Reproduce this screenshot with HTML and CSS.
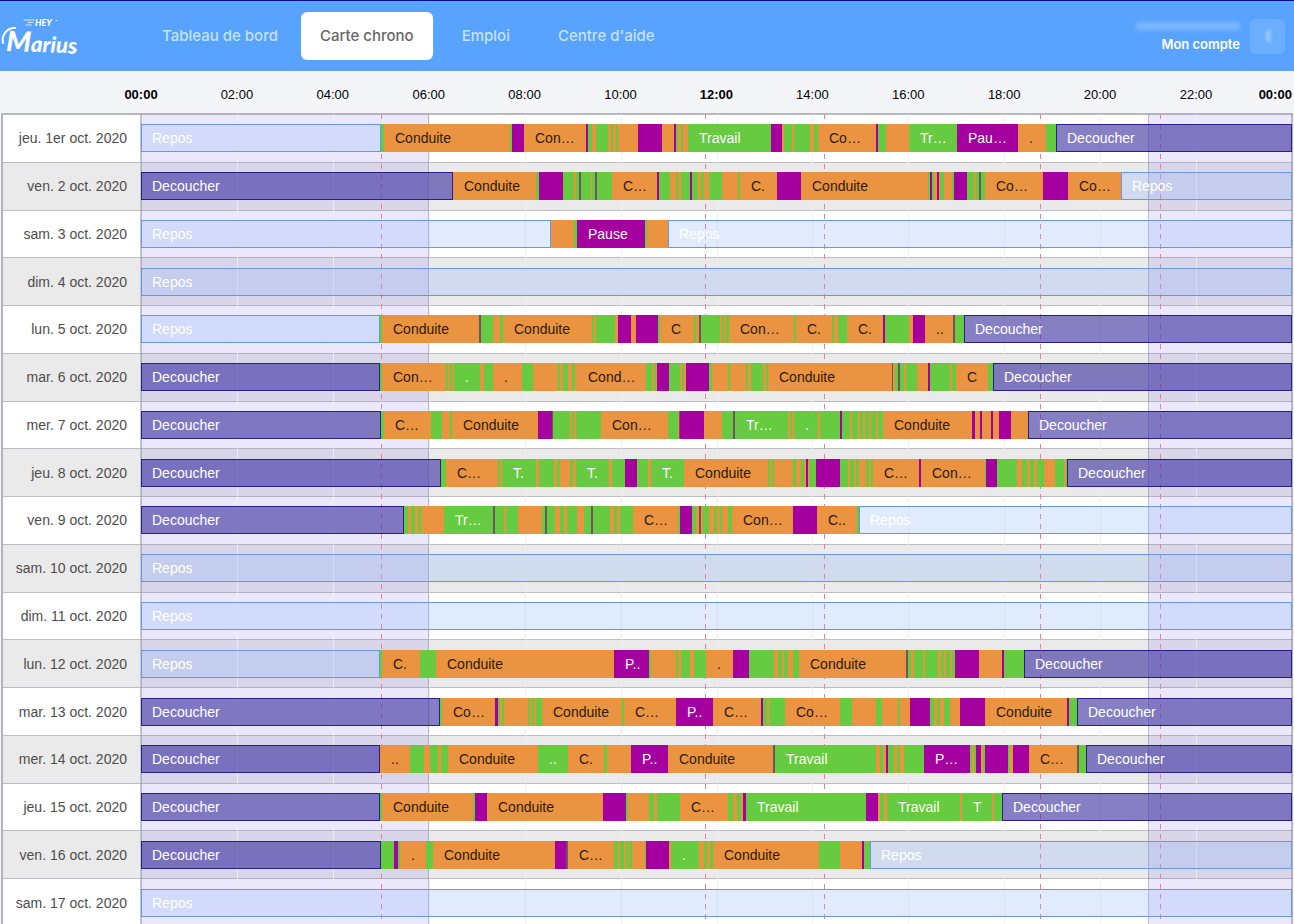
FILE: index.html
```html
<!DOCTYPE html>
<html lang="fr">
<head>
<meta charset="utf-8">
<meta name="viewport" content="width=device-width, initial-scale=1">
<title>Hey Marius - Carte chrono</title>
<link rel="stylesheet" href="styles.css">
</head>
<body>
<header class="topbar">
  <a class="logo" href="#" aria-label="Hey Marius">
    <svg class="logo-art" viewBox="0 0 80 42" width="80" height="42">
      <g stroke="#fff" stroke-width="1" stroke-linecap="round" opacity=".75">
        <path d="M24 5h10M28 7.500h5M26 10h5M56 5.500h1"/>
      </g>
      <text class="logo-hey" x="35" y="11">HEY</text>
      <text class="logo-name" x="6" y="36" transform="rotate(2 6 36)"><tspan class="logo-initial">M</tspan>arius</text>
      <path d="M3 28C1 20 8 12 15 13" fill="none" stroke="#fff" stroke-width="2" stroke-linecap="round"/>
      <path d="M71 38c2 0 4-1 5-3" fill="none" stroke="#fff" stroke-width="2" stroke-linecap="round"/>
    </svg>
  </a>
  <nav class="nav">
    <a class="nav-link" href="#">Tableau de bord</a>
    <a class="nav-link nav-link--active" href="#" aria-current="page">Carte chrono</a>
    <a class="nav-link" href="#">Emploi</a>
    <a class="nav-link" href="#">Centre d'aide</a>
  </nav>
  <div class="account">
    <div class="account-text">
      <span class="account-name" aria-hidden="true"></span>
      <a class="account-link" href="#">Mon compte</a>
    </div>
    <button class="avatar" type="button" aria-label="Profil"><span class="avatar-mark"></span></button>
  </div>
</header>
<main class="board">
  <div class="axis" id="axis"></div>
  <div class="chart" id="chart">
    <div class="backdrop" id="backdrop">
      <div class="night night--morning"></div>
      <div class="night night--evening"></div>
    </div>
  </div>
</main>
<script src="chart.js"></script>
</body>
</html>
```

FILE: styles.css
```css
* { box-sizing: border-box; }

body {
  margin: 0;
  height: 100vh;
  overflow: hidden;
  display: flex;
  flex-direction: column;
  background: #f4f5f8;
  font-family: "Liberation Sans", Arial, sans-serif;
  font-size: 14px;
}

a { color: inherit; text-decoration: none; }

.topbar {
  flex: none;
  display: flex;
  align-items: center;
  height: 71px;
  padding-right: 9px;
  border-top: 1px solid #07107c;
  background: #58a3ff;
  color: #fff;
  font-family: Inter, sans-serif;
}

.logo { width: 143px; height: 42px; }
.logo-art { display: block; }
.logo-hey { fill: #fff; font: italic 900 9px Lato, sans-serif; }
.logo-name { fill: #fff; font: italic 900 22px Lato, sans-serif; }
.logo-initial { font-size: 28px; }

.nav { display: flex; gap: 10px; flex: 1; }

.nav-link {
  padding: 0 19px;
  border-radius: 6px;
  line-height: 48px;
  font-size: 15px;
  font-weight: 500;
  color: #c4e2ff;
  white-space: nowrap;
}
.nav-link--active { margin-left: -6px; background: #fff; color: #666; }

.account { display: flex; align-items: center; gap: 10px; }
.account-text { display: flex; flex-direction: column; align-items: flex-end; gap: 5px; padding-top: 3px; }
.account-name {
  width: 104px;
  height: 8px;
  background: rgba(255, 255, 255, .22);
  filter: blur(2px);
}
.account-link { font-size: 13px; line-height: 18px; font-weight: 600; }
.avatar {
  display: grid;
  place-items: center;
  width: 35px;
  height: 35px;
  padding: 0;
  border: 0;
  border-radius: 6px;
  background: #6baeff;
}
.avatar-mark {
  width: 6px;
  height: 14px;
  border-radius: 6px 0 0 6px;
  background: #90c3ff;
  filter: blur(1px);
}

.board { flex: 1; min-height: 0; }

.axis {
  display: flex;
  justify-content: space-between;
  height: 42px;
  padding: 4px 2px 0 141px;
  font-size: 13px;
  line-height: 40px;
  color: #000;
}
.tick { display: flex; justify-content: center; width: 0; }
.tick--major { font-weight: 700; }
.tick:last-child { justify-content: flex-end; }

.chart {
  position: relative;
  display: grid;
  grid-auto-rows: 1fr;
  min-height: 813px;
  margin: 0 1px;
  border: solid #b3b4ba;
  border-width: 1px 1px 0 2px;
}

.backdrop { position: absolute; top: 0; bottom: 0; left: 138px; right: 0; }

.night {
  position: absolute;
  top: 0;
  bottom: 0;
  background: rgba(120, 90, 230, .14);
  border: solid rgba(80, 80, 110, .3);
  border-width: 0 1px;
}
.night--morning { left: 0; width: 25%; }
.night--evening { left: 87.5%; right: 0; }

.gridline { position: absolute; top: 0; bottom: 0; width: 1px; background: rgba(240, 236, 242, .8); }
.limit {
  position: absolute;
  top: 0;
  bottom: 0;
  width: 1px;
  background: repeating-linear-gradient(#ea7da6 0 5px, transparent 5px 10px);
}

.row { display: flex; align-items: center; background: #fff; border-top: 1px solid #bcbdc2; }
.row:nth-child(odd) { background: #eaeaea; }

.day {
  flex: none;
  align-self: stretch;
  display: flex;
  align-items: center;
  justify-content: flex-end;
  width: 138px;
  padding-right: 13px;
  border-right: 1px solid #c6c6cc;
  color: #4d4d4d;
  white-space: nowrap;
}

.track { position: relative; flex: 1; min-width: 0; display: flex; height: 28px; }

.bar { flex-basis: 0; min-width: 0; overflow: hidden; line-height: 28px; white-space: nowrap; color: #fff; }
.bar-label { padding-left: 11px; }
.bar--conduite { background: #ea9441; color: #2e1b06; }
.bar--travail { background: #66cb40; }
.bar--pause { background: #a5009f; }
.bar--autre { background: #705463; }
.bar--repos { background: rgba(130, 180, 250, .25); box-shadow: inset 0 0 0 1px #6599e6; }
.bar--decoucher { background: rgba(72, 60, 165, .66); box-shadow: inset 0 0 0 1px #27208b; }
```

FILE: chart.js
```js
// Axis units of the day track: START is 00:00, END is 24:00.
const START = 141;
const END = 1292;

const KINDS = { o: "conduite", g: "travail", p: "pause", k: "autre", R: "repos", D: "decoucher" };
const DEFAULT_LABELS = { R: "Repos", D: "Decoucher" };

// Each activity is <start><kind>[:label] and runs until the next one.
const DAYS = [
  ["jeu. 1er oct. 2020", "141R 381g 384o:Conduite 510g 512p 524o:Con… 586p 588g 592o 596g 608o 611g 613o 616g 618o 638p 662o 674p 676g 678o 681g 683o 686o 688g:Travail 771p 782o 784g 792o 794g 810o 814g 818o:Co… 876p 878g 886o 909g:Tr… 957p:Pau… 1018o:. 1046g 1056D"],
  ["ven. 2 oct. 2020", "141D 453o:Conduite 536g 539p 563g 574o 576g 579k 581g 591o 592g 595k 597g 612o:C… 657p 659g 670o 676g 678o 681g 690p 692g 698o 701g 704o 709g 722o 738g 740o:C. 777p 801o:Conduite 928g 930p 932g 934o 937p 939o 940g 944o 952g 954p 967g 974o 976g 979k 981g 985o:Co… 1043p 1068o:Co… 1121R"],
  ["sam. 3 oct. 2020", "141R 551o 574g 577p:Pause 645g 647o 668R"],
  ["dim. 4 oct. 2020", "141R"],
  ["lun. 5 oct. 2020", "141R 380g 382o:Conduite 479k 481g 493o 500g 503o:Conduite 592g 594o 596g 615o 618p 631o 636p 658g 660o:C 694g 696o 699k 701g 720o 722g 724o 726g 729o:Con… 794g 796o:C. 832g 834o 838g 847o:C. 883p 885g 909o 913p 925o:.. 953k 955g 964D"],
  ["mar. 6 oct. 2020", "141D 380g 382o:Con… 446g 448o 450g 452o 454g:. 480o 484g 493o:. 522g 533o 558g 560o 563g 568o 572g 575o 577o:Cond… 646g 652o 654g 656o 657p 669g 680o 682g 684o 686p 709g 712o 728g 730o 746g 748o 751g 763o 766g 768o:Conduite 892k 893o 895g 898k 900g 904o 906g 917o 928p 930g 950o 952g 956o:C 988g 993D"],
  ["mer. 7 oct. 2020", "141D 381g 384o:C… 431g 442o 450g 452o:Conduite 538p 552k 553g 570o 572g 574o 576g 601o:Con… 668g 678o 679k 680p 704o 722g 733k 735g:Tr… 788o 790g 792o 794g:. 818o 820g 840p 842g 850o 852g 858o 860g 863o 865g 869o 871g 876o 878g 883o:Conduite 972p 975o 980p 982o 991p 993o 999p 1011o 1028D"],
  ["jeu. 8 oct. 2020", "141D 441g 446o:C… 498g 500o 502g:T. 536o 539g 554o 557g 560o 570g 573o 576g:T. 609o 612g 625p 637g 648o 651g:T. 684o:Conduite 768g 770o 772g 774o 793g 796o 801g 804o 806p 808o 809g 816p 840g 848o 850g 854o 856g 859o 866g 869o 871g 873o:C… 919p 921o:Con… 985g 986p 997g 1017o 1022g 1027o 1030g 1034o 1037g 1044o 1055g 1064o 1066g 1067D"],
  ["ven. 9 oct. 2020", "141D 404g 408o 411g 415o 418g 421o 424o 444g:Tr… 493k 495g 504o 506g 518o 542g 545k 547g 555o 560g 564o 567g 577o 584g 591k 593g 610o 614g 617o 620g 633o:C… 678g 680p 692g 696o 699k 701o 703g 709o 714g 717o 720g 722o 728g 732o:Con… 793p 817o:C.. 857g 859R"],
  ["sam. 10 oct. 2020", "141R"],
  ["dim. 11 oct. 2020", "141R"],
  ["lun. 12 oct. 2020", "141R 380g 382o:C. 420g 436o:Conduite 614p:P.. 649g 651o 676g 678o 681g 690o 694g 706o:. 733p 749g 774o 778g 782o 784g 788o 793g 799o:Conduite 906k 908g 911o 914g 923o 925g 938o 941g 944o 946g 950o 952g 955p 979o 1002p 1004g 1024D"],
  ["mar. 13 oct. 2020", "141D 440g 442o:Co… 495p 498g 500o 502g 504o 528g 530o 532g 534o 536g 542o:Conduite 622g 624o:C… 676p:P.. 713o:C… 761p 763g 767o 769g 785o:Co… 840g 852o 876g 882o 898g 900o 910p 930g 934o 937g 940o 944g 950o 960p 985o:Conduite 1067p 1069g 1077D"],
  ["mer. 14 oct. 2020", "141D 380o:.. 410g 424o 430g 438o 441g 448o:Conduite 538g:.. 568o:C. 604g 607o 631p:P.. 668o:Conduite 773k 775g:Travail 876o 880g 883o 886p 888g 894o 897g 900o 904g 924p:P… 970g 972o 974g 976p 981o 983g 985p 1008g 1010o 1013p 1029o:C… 1077k 1079g 1086D"],
  ["jeu. 15 oct. 2020", "141D 380g 382o:Conduite 473g 475p 487o:Conduite 603p 626g 628o 649g 654o 657g 680o:C… 728g 733o 737g 741o 743p 746g:Travail 866p 878o 880g 884o 887g:Travail 960o 962g:T 992o 994g 1002D"],
  ["ven. 16 oct. 2020", "141D 381g 394p 398g 400o:. 426g 433o:Conduite 555p 566k 568o:C… 614g 618o 620g 624o 626g 628o 629g 632o 645g 646p 669o 671g:. 699o 704g 707o 710g 713o:Conduite 819g 840o 862p 864g 870R"],
  ["sam. 17 oct. 2020", "141R"]
];

function make(className, parent, text) {
  const node = document.createElement("div");
  node.className = className;
  if (text) node.textContent = text;
  parent.append(node);
  return node;
}

const axis = document.getElementById("axis");
const backdrop = document.getElementById("backdrop");
const chart = document.getElementById("chart");

for (let hour = 0; hour <= 24; hour += 2) {
  const text = String(hour % 24).padStart(2, "0") + ":00";
  make(hour % 12 ? "tick" : "tick tick--major", axis, text);
  if (hour % 24) make("gridline", backdrop).style.left = hour / 24 * 100 + "%";
}

for (const hour of [5, 11.75, 14.25, 18.75, 21.25]) {
  make("limit", backdrop).style.left = hour / 24 * 100 + "%";
}

for (const [day, log] of DAYS) {
  const row = make("row", chart);
  make("day", row, day);
  const track = make("track", row);
  const items = log.split(" ").map(item => item.match(/^(\d+)(\w)(?::(.+))?$/));
  items.forEach(([, start, kind, label], i) => {
    const end = i + 1 < items.length ? items[i + 1][1] : END;
    const bar = make("bar bar--" + KINDS[kind], track);
    bar.style.flexGrow = end - start;
    const text = label || DEFAULT_LABELS[kind];
    if (text) {
      const span = document.createElement("span");
      span.className = "bar-label";
      span.textContent = text;
      bar.append(span);
    }
  });
}
```
